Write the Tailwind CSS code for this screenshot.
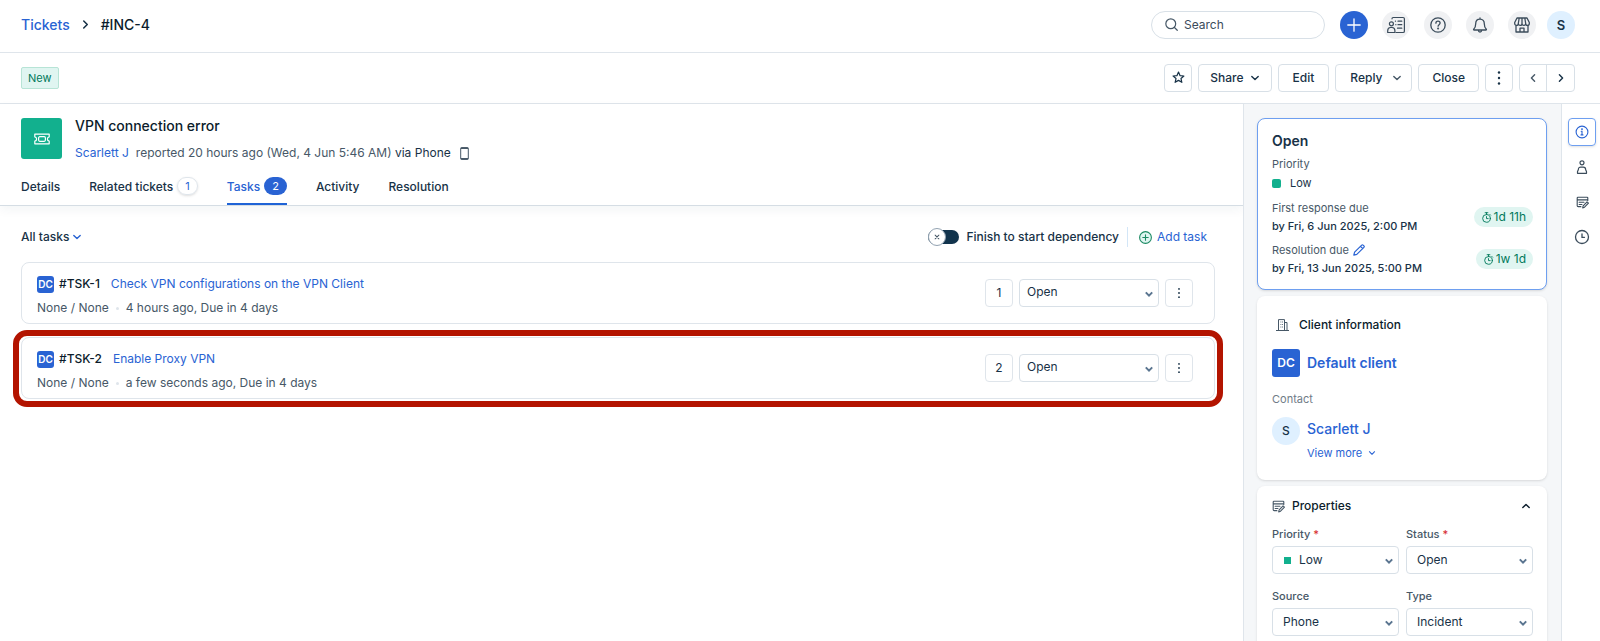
<!DOCTYPE html>
<html lang="en">
<head>
  <meta charset="utf-8" />
  <meta name="viewport" content="width=device-width, initial-scale=1" />
  <title>#INC-4 — Tickets</title>
  <script src="https://cdn.jsdelivr.net/npm/@tailwindcss/browser@4"></script>
</head>

<body class="h-screen flex flex-col overflow-hidden bg-white font-['Inter',sans-serif] text-[12px] leading-5 text-[#183247]">

  <!-- Shared icons -->
  <svg class="hidden">
    <symbol id="chevron" viewBox="0 0 10 10"><path d="M1.8 3.4 5 6.6l3.200-3.200" fill="none" stroke="currentColor" stroke-width="1.4" stroke-linecap="round" stroke-linejoin="round"/></symbol>
    <symbol id="caret" viewBox="0 0 10 10"><path d="M1.8 3.4 5 6.6l3.200-3.200" fill="none" stroke="currentColor" stroke-width="2"/></symbol>
    <symbol id="kebab" viewBox="0 0 16 16"><g fill="currentColor"><circle cx="8" cy="2.5" r="1.2"/><circle cx="8" cy="8" r="1.2"/><circle cx="8" cy="13.5" r="1.2"/></g></symbol>
    <symbol id="timer" viewBox="0 0 12 12"><g fill="none" stroke="currentColor" stroke-linecap="round"><circle cx="6" cy="7" r="4.2"/><path d="M4.5.8h3M6 .8v2M6 5v2.2h1.8M9.6 2.6l.9.9"/></g></symbol>
    <symbol id="form" viewBox="0 0 14 14"><g fill="none" stroke="currentColor" stroke-width="1.2" stroke-linejoin="round" stroke-linecap="round"><path d="M12.700 4.800V2.2c0-.5-.3-.9-.8-.9H2.1c-.5 0-.8.4-.8.9v8.300c0 .6.4 1 1 1h3M1.300 4.200h11.400M3.400 6.800h5.200M3.400 9.200h3"/><path d="m7.200 12.800.5-2.100 4.200-4.400 1.500 1.400-4.200 4.400z"/></g></symbol>
  </svg>

  <!-- Top bar -->
  <header class="flex shrink-0 items-center border-b border-[#dfe5eb] h-[53px] pb-[3px] pl-[21px] pr-[25px]">
    <nav class="flex items-center text-sm font-medium">
      <a href="#" class="text-[#2963d3]">Tickets</a>
      <svg class="size-[11px] mx-[10px] -rotate-90"><use href="#chevron"/></svg>
      <span class="text-[#0b1c2b]">#INC-4</span>
    </nav>

    <label class="ml-auto flex w-[174px] h-7 items-center gap-[6px] rounded-full border border-[#d8e0e7] px-[13px] text-[#475867]">
      <svg class="size-[13px] shrink-0" viewBox="0 0 14 14" fill="none" stroke="currentColor" stroke-width="1.3" stroke-linecap="round"><circle cx="6.2" cy="6.2" r="5.300"/><path d="m10.200 10.200 3 3"/></svg>
      <input type="text" aria-label="Search" placeholder="Search" class="w-full min-w-0 outline-none placeholder:text-[#3b4c5b]">
    </label>

    <div class="ml-[15px] flex items-center gap-[14px] text-[#3b4c5b]">
      <button aria-label="Create" class="grid size-7 place-items-center rounded-full bg-[#2963d3] text-white">
        <svg class="size-4" viewBox="0 0 16 16" stroke="currentColor" stroke-width="1.3" stroke-linecap="round"><path d="M8 1.800v12.400M1.800 8h12.400"/></svg>
      </button>
      <button aria-label="Directory" class="grid size-7 place-items-center rounded-full bg-[#f0f1f3]">
        <svg class="size-[18px]" viewBox="0 0 18 18" fill="none" stroke="currentColor" stroke-width="1.2" stroke-linecap="round" stroke-linejoin="round"><path d="M5 2.800c0-.8.500-1.300 1.200-1.300h9.800c.9 0 1.400.5 1.400 1.300v12.400c0 .8-.5 1.300-1.400 1.300H9"/><path d="M.7 16.500v-1.800c0-2 1.300-3.200 2.800-3.200h1.600c1.500 0 2.800 1.200 2.800 3.200v1.800z"/><circle cx="4.400" cy="7.800" r="2"/><path d="M8.400 5.200h.1M11 5.200h3.800M8.800 8.700h.1M11 8.700h3.800M10.500 12.200h4.300"/></svg>
      </button>
      <button aria-label="Help" class="grid size-7 place-items-center rounded-full bg-[#f0f1f3]">
        <svg class="size-4" viewBox="0 0 16 16" fill="none" stroke="currentColor" stroke-width="1.3" stroke-linecap="round"><circle cx="8" cy="8" r="7.200"/><path d="M5.900 6.200c0-1.200.9-2 2.100-2s2.100.8 2.100 1.900c0 1.500-2 1.600-2 3.100"/><circle cx="8.100" cy="11.500" r=".4" fill="currentColor"/></svg>
      </button>
      <button aria-label="Notifications" class="grid size-7 place-items-center rounded-full bg-[#f0f1f3]">
        <svg class="size-4" viewBox="0 0 16 16" fill="none" stroke="currentColor" stroke-width="1.3" stroke-linecap="round" stroke-linejoin="round"><path d="M8 2.2c-2.800 0-4.300 2-4.300 4.500 0 3.300-.8 4.400-2 5.500-.3.400-.1.800.4.800h11.800c.5 0 .7-.4.400-.8-1.200-1.100-2-2.200-2-5.500 0-2.500-1.500-4.500-4.300-4.500zM8 2.200V1M6.300 13.200c.1 1.100.8 1.800 1.700 1.800s1.600-.7 1.700-1.800"/></svg>
      </button>
      <button aria-label="Marketplace" class="grid size-7 place-items-center rounded-full bg-[#f0f1f3]">
        <svg class="size-4" viewBox="0 0 16 16" fill="none" stroke="currentColor" stroke-width="1.3" stroke-linecap="round" stroke-linejoin="round"><path d="M3 1h10l2.300 4.500v1c0 1.100-.8 1.900-1.800 1.900s-1.800-.8-1.800-1.900c0 1.100-.8 1.900-1.850 1.900S8 7.600 8 6.500c0 1.100-.8 1.900-1.850 1.900S4.300 7.600 4.300 6.500c0 1.100-.8 1.900-1.800 1.900S.7 7.600.7 6.500v-1L3 1zM5.200 1l-.9 5.500M8 1v5.500M10.800 1l.9 5.500M2 8.500V15h12V8.500M6 15v-3.800h4V15"/></svg>
      </button>
    </div>
    <button aria-label="Profile" class="ml-[11px] grid size-7 place-items-center rounded-full bg-[#dff0ff] text-[13px] font-semibold">S</button>
  </header>

  <!-- Ticket actions -->
  <div class="flex h-[51px] shrink-0 items-center gap-[6px] border-b border-[#dfe5eb] pb-px pl-[21px] pr-[25px] font-medium">
    <span class="mr-auto rounded-xs border border-[#b7e4d6] bg-[#e0f5f1] px-[6px] text-[11px] font-normal text-[#00795b]">New</span>
    <button aria-label="Favourite" class="grid size-7 place-items-center rounded border border-[#d8e0e7]">
      <svg class="size-[13px]" viewBox="0 0 14 14" fill="none" stroke="currentColor" stroke-width="1.3" stroke-linejoin="round"><path d="m7 1.200 1.700 3.800 4.100.4-3.100 2.700.9 4.100L7 10.100l-3.600 2.100.9-4.100L1.200 5.400l4.100-.4z"/></svg>
    </button>
    <button class="flex h-7 items-center gap-[6px] rounded border border-[#d8e0e7] px-[11px]">Share <svg class="size-[10px]"><use href="#chevron"/></svg></button>
    <button class="h-7 rounded border border-[#d8e0e7] px-[14px]">Edit</button>
    <button class="flex h-7 items-center gap-[10px] rounded border border-[#d8e0e7] pl-[14px] pr-[9px]">Reply <svg class="size-[10px] text-[#475867]"><use href="#chevron"/></svg></button>
    <button class="h-7 rounded border border-[#d8e0e7] px-[13px]">Close</button>
    <button aria-label="More" class="grid size-7 place-items-center rounded border border-[#d8e0e7]"><svg class="size-4"><use href="#kebab"/></svg></button>
    <div class="flex h-7 divide-x divide-[#d8e0e7] rounded border border-[#d8e0e7]">
      <button aria-label="Previous" class="grid w-[27px] place-items-center text-[#475867]"><svg class="size-[10px] rotate-90"><use href="#chevron"/></svg></button>
      <button aria-label="Next" class="grid w-[27px] place-items-center"><svg class="size-[10px] -rotate-90"><use href="#chevron"/></svg></button>
    </div>
  </div>

  <div class="flex min-h-0 flex-1">

    <!-- Ticket -->
    <main class="min-w-0 flex-1">
      <div class="border-b border-[#d5dde4] px-[21px] pt-[14px] shadow-[0_4px_10px_rgba(18,52,77,0.05)]">
        <div class="flex gap-[13px]">
          <div class="grid size-[41px] place-items-center rounded-[3px] bg-[#12b08e] text-white">
            <svg class="size-4" viewBox="0 0 16 16" fill="none" stroke="currentColor" stroke-width="1.2" stroke-linejoin="round"><path d="M.8 3.200h14.400v2.600c-1.200.2-1.800 1.100-1.800 2.200s.6 2 1.800 2.200v2.600H.8v-2.600C2 10 2.600 9.100 2.600 8S2 6 .8 5.800z"/><rect x="4.600" y="5.700" width="6.800" height="4.600" rx="1.200"/></svg>
          </div>
          <div class="-mt-[2px]">
            <h1 class="text-sm font-medium text-[#0b1c2b]">VPN connection error</h1>
            <p class="mt-[7px] flex items-center text-[#475867]">
              <a href="#" class="mr-[7px] text-[#2963d3]">Scarlett J</a>
              reported 20 hours ago (Wed, 4 Jun 5:46 AM)&nbsp;<span class="text-[#183247]">via Phone</span>
              <svg class="ml-[9px] h-[13px] w-[9px]" viewBox="0 0 9 13" fill="none" stroke="currentColor"><rect x=".7" y=".6" width="7.600" height="11.800" rx="1"/><path d="M.7 1.300h7.600M.7 11.700h7.600" stroke-width="1.600"/></svg>
            </p>
          </div>
        </div>
        <nav class="mt-[7px] flex h-[35px] gap-[29px] font-medium">
          <a href="#" class="pt-[7px]">Details</a>
          <a href="#" class="flex items-start gap-1 pt-[7px]">Related tickets <span class="rounded-full border border-[#dfe5eb] px-[7px] text-[11px] leading-4 font-normal text-[#2963d3] shadow-sm">1</span></a>
          <a href="#" class="flex items-start gap-1 border-b-2 border-[#1f63d6] pt-[7px] text-[#2963d3]">Tasks <span class="rounded-full bg-[#2963d3] px-2 text-[11px] leading-[18px] font-normal text-white">2</span></a>
          <a href="#" class="pt-[7px]">Activity</a>
          <a href="#" class="pt-[7px]">Resolution</a>
        </nav>
      </div>

      <!-- Tasks -->
      <div class="pl-[21px] pr-7 pt-[21px]">
        <div class="flex items-center pr-2">
          <button class="flex items-center gap-[3px] font-medium">All tasks <svg class="size-[10px] text-[#2963d3]"><use href="#chevron"/></svg></button>
          <label class="ml-auto flex items-center gap-[7px] border-r border-[#d3e6f7] pr-2 font-medium">
            <input type="checkbox" class="peer sr-only">
            <span class="flex h-[14px] w-[31px] items-center rounded-full bg-[#12344d]">
              <svg class="size-[18px] shrink-0 rounded-full border border-[#92a2b1] bg-white p-[5px]" viewBox="0 0 6 6" stroke="#475867" stroke-width="1.100" stroke-linecap="round"><path d="m.4.400 5.200 5.200M5.600.400.400 5.600"/></svg>
            </span>
            Finish to start dependency
          </label>
          <button class="ml-[11px] flex items-center gap-[5px] text-[#2963d3]">
            <svg class="size-[13px]" viewBox="0 0 13 13" fill="#e0f5f1" stroke="#1c8a63" stroke-width="1.100" stroke-linecap="round"><circle cx="6.500" cy="6.500" r="5.900"/><path d="M6.500 3.800v5.400M3.800 6.500h5.400"/></svg>
            Add task
          </button>
        </div>

        <ul class="mt-[15px] space-y-[13px]">
          <li class="flex h-[62px] items-center rounded-lg border border-[#dfe5eb] pl-[15px] pr-[21px]">
            <div class="flex-1 pt-[6px]">
              <div class="flex items-center">
                <span class="mr-[5px] size-[17px] rounded-[3px] bg-[#2963d3] text-center text-[10px] leading-[17px] font-semibold text-white">DC</span>
                <span class="mr-[11px] font-medium text-[#0b1c2b]">#TSK-1</span>
                <a href="#" class="text-[#2963d3]">Check VPN configurations on the VPN Client</a>
              </div>
              <div class="mt-1 flex items-center text-[#475867]">None / None<span class="mx-[7px] size-[3px] rounded-full bg-[#dfe5eb]"></span>4 hours ago, Due in 4 days</div>
            </div>
            <span class="size-7 rounded border border-[#dfe5eb] text-center leading-[26px]">1</span>
            <div class="relative mx-[6px]">
              <select aria-label="Status of TSK-1" class="block h-7 w-[140px] appearance-none rounded border border-[#d8e0e7] pb-[2px] pl-[7px]"><option>Open</option></select>
              <svg class="pointer-events-none absolute right-[5px] top-[10px] size-[10px] text-[#5a7590]"><use href="#caret"/></svg>
            </div>
            <button aria-label="More actions" class="grid size-7 place-items-center rounded border border-[#dfe5eb]"><svg class="size-3"><use href="#kebab"/></svg></button>
          </li>
          <li class="relative flex h-[62px] items-center rounded-lg border border-[#dfe5eb] pl-[15px] pr-[21px]">
            <!-- highlight frame -->
            <div class="pointer-events-none absolute -inset-x-[9px] -top-2 -bottom-[9px] rounded-[14px] border-[6px] border-[#b31400]"></div>
            <div class="flex-1 pt-[6px]">
              <div class="flex items-center">
                <span class="mr-[5px] size-[17px] rounded-[3px] bg-[#2963d3] text-center text-[10px] leading-[17px] font-semibold text-white">DC</span>
                <span class="mr-[11px] font-medium text-[#0b1c2b]">#TSK-2</span>
                <a href="#" class="text-[#2963d3]">Enable Proxy VPN</a>
              </div>
              <div class="mt-1 flex items-center text-[#475867]">None / None<span class="mx-[7px] size-[3px] rounded-full bg-[#dfe5eb]"></span>a few seconds ago, Due in 4 days</div>
            </div>
            <span class="size-7 rounded border border-[#dfe5eb] text-center leading-[26px]">2</span>
            <div class="relative mx-[6px]">
              <select aria-label="Status of TSK-2" class="block h-7 w-[140px] appearance-none rounded border border-[#d8e0e7] pb-[2px] pl-[7px]"><option>Open</option></select>
              <svg class="pointer-events-none absolute right-[5px] top-[10px] size-[10px] text-[#5a7590]"><use href="#caret"/></svg>
            </div>
            <button aria-label="More actions" class="grid size-7 place-items-center rounded border border-[#dfe5eb]"><svg class="size-3"><use href="#kebab"/></svg></button>
          </li>
        </ul>
      </div>
    </main>

    <!-- Ticket summary -->
    <aside class="w-[319px] shrink-0 overflow-hidden border-x border-[#dfe5eb] bg-[#f5f7f9] pl-[13px] pr-[14px] pt-[14px]">
      <section class="rounded-lg border border-[#6e9ff0] bg-white pl-[14px] pr-[13px] py-3 text-[11px] shadow-sm">
        <h2 class="text-sm font-semibold">Open</h2>
        <p class="mt-1 leading-[19px] text-[#475867]">Priority</p>
        <p class="flex items-center gap-[9px] leading-[19px]"><span class="size-[9px] rounded-xs bg-[#12b08e]"></span>Low</p>
        <div class="mt-[6px] flex items-center justify-between">
          <div>
            <p class="leading-[18px] text-[#475867]">First response due</p>
            <p class="leading-[18px] font-medium">by Fri, 6 Jun 2025, 2:00 PM</p>
          </div>
          <span class="flex items-center gap-[2px] rounded-full bg-[#e0f5f1] px-[7px] text-xs leading-5 text-[#00795b]"><svg class="size-[11px]"><use href="#timer"/></svg>1d 11h</span>
        </div>
        <div class="mt-[6px] flex items-center justify-between">
          <div>
            <p class="flex items-center gap-1 leading-[18px] text-[#475867]">Resolution due
              <svg class="size-3 text-[#2963d3]" viewBox="0 0 12 12" fill="none" stroke="currentColor" stroke-width="1.200" stroke-linejoin="round"><path d="m.8 11.200.8-3L8.700 1.100c.4-.4 1-.4 1.400 0l.8.8c.4.400.4 1 0 1.400L3.800 10.400zM7.500 2.300l2.200 2.200"/></svg>
            </p>
            <p class="leading-[18px] font-medium">by Fri, 13 Jun 2025, 5:00 PM</p>
          </div>
          <span class="flex items-center gap-[2px] rounded-full bg-[#e0f5f1] px-[7px] text-xs leading-5 text-[#00795b]"><svg class="size-[11px]"><use href="#timer"/></svg>1w 1d</span>
        </div>
      </section>

      <section class="mt-[6px] rounded-lg bg-white pl-[15px] pr-[14px] pt-[19px] pb-[15px] shadow-sm">
        <h2 class="flex items-center gap-[10px] pl-1 font-medium text-[#0b1c2b]">
          <svg class="h-3 w-[13px] text-[#475867]" viewBox="0 0 13 12" fill="none" stroke="currentColor"><path d="M0 11.500h13M2.500 11.500V.6h6v10.900M8.500 3.500h2.500v8M4.500 3h.8M6.200 3H7M4.500 5.500h.8M6.200 5.500H7M4.500 8h.8M6.200 8H7"/></svg>
          Client information
        </h2>
        <div class="mt-[14px] flex items-center gap-[7px] text-sm font-semibold">
          <span class="size-7 rounded-[3px] bg-[#2963d3] text-center text-xs leading-7 text-white">DC</span>
          <a href="#" class="text-[#2963d3]">Default client</a>
        </div>
        <p class="mt-3 text-[11px] text-[#6f7c87]">Contact</p>
        <div class="mt-2 flex gap-[7px]">
          <span class="size-7 rounded-full bg-[#dff0ff] text-center text-xs leading-7 font-medium">S</span>
          <div>
            <a href="#" class="block text-sm leading-6 font-medium text-[#2963d3]">Scarlett J</a>
            <button class="flex items-center gap-[6px] text-[11px] leading-6 text-[#2963d3]">View more <svg class="size-2"><use href="#chevron"/></svg></button>
          </div>
        </div>
      </section>

      <section class="mt-[6px] rounded-lg bg-white pl-[15px] pr-[14px] pt-[10px] pb-6 shadow-sm">
        <h2><button class="flex w-full items-center gap-[7px] font-medium text-[#0b1c2b]">
          <svg class="size-[13px] text-[#475867]"><use href="#form"/></svg>
          Properties
          <svg class="ml-auto mr-[2px] size-[10px] rotate-180"><use href="#chevron"/></svg>
        </button></h2>
        <div class="mt-2 grid grid-cols-2 gap-x-[7px] gap-y-3">
          <div>
            <label for="priority" class="block text-[11px] font-medium text-[#475867]">Priority <span class="text-[#d72d30]">*</span></label>
            <div class="relative mt-[2px]">
              <select id="priority" class="block h-7 w-full appearance-none rounded border border-[#d8e0e7] pl-[26px]"><option>Low</option></select>
              <span class="pointer-events-none absolute left-[12px] top-[11px] size-[7px] bg-[#12b08e]"></span>
              <svg class="pointer-events-none absolute right-[5px] top-[10px] size-[10px] text-[#5a7590]"><use href="#caret"/></svg>
            </div>
          </div>
          <div>
            <label for="status" class="block text-[11px] font-medium text-[#475867]">Status <span class="text-[#d72d30]">*</span></label>
            <div class="relative mt-[2px]">
              <select id="status" class="block h-7 w-full appearance-none rounded border border-[#d8e0e7] pl-[10px]"><option>Open</option></select>
              <svg class="pointer-events-none absolute right-[5px] top-[10px] size-[10px] text-[#5a7590]"><use href="#caret"/></svg>
            </div>
          </div>
          <div>
            <label for="source" class="block text-[11px] font-medium text-[#475867]">Source</label>
            <div class="relative mt-[2px]">
              <select id="source" class="block h-7 w-full appearance-none rounded border border-[#d8e0e7] pl-[10px]"><option>Phone</option></select>
              <svg class="pointer-events-none absolute right-[5px] top-[10px] size-[10px] text-[#5a7590]"><use href="#caret"/></svg>
            </div>
          </div>
          <div>
            <label for="type" class="block text-[11px] font-medium text-[#475867]">Type</label>
            <div class="relative mt-[2px]">
              <select id="type" class="block h-7 w-full appearance-none rounded border border-[#d8e0e7] pl-[10px]"><option>Incident</option></select>
              <svg class="pointer-events-none absolute right-[5px] top-[10px] size-[10px] text-[#5a7590]"><use href="#caret"/></svg>
            </div>
          </div>
        </div>
      </section>
    </aside>

    <!-- Side rail -->
    <nav class="flex w-[38px] shrink-0 flex-col items-center gap-[7px] pl-[2px] pt-[14px] text-[#3b4c5b]">
      <button aria-label="Ticket info" class="grid size-7 place-items-center rounded border border-[#6e9ff0] text-[#2963d3] shadow-sm">
        <svg class="size-[14px]" viewBox="0 0 14 14" fill="none" stroke="currentColor" stroke-width="1.100" stroke-linecap="round"><circle cx="7" cy="7" r="5.900"/><path d="M6.200 6.200H7v3.600M6 9.900h2"/><circle cx="7" cy="4.100" r=".4" fill="currentColor"/></svg>
      </button>
      <button aria-label="Requester" class="grid size-7 place-items-center">
        <svg class="size-[14px]" viewBox="0 0 14 14" fill="none" stroke="currentColor" stroke-width="1.200" stroke-linejoin="round"><circle cx="7" cy="2.800" r="2"/><path d="M2.500 13.300v-1.500c0-1.200.9-1.300.9-2.500 0-1.400 1-2.200 2.300-2.200h2.600c1.300 0 2.300.8 2.300 2.200 0 1.200.9 1.300.9 2.500v1.500z"/></svg>
      </button>
      <button aria-label="Properties" class="grid size-7 place-items-center"><svg class="size-[13px]"><use href="#form"/></svg></button>
      <button aria-label="Timeline" class="grid size-7 place-items-center">
        <svg class="size-4" viewBox="0 0 16 16" fill="none" stroke="currentColor" stroke-width="1.300" stroke-linecap="round"><circle cx="8" cy="8" r="6.500"/><path d="M8 5v3.300h2.500"/></svg>
      </button>
    </nav>
  </div>
</body>
</html>
